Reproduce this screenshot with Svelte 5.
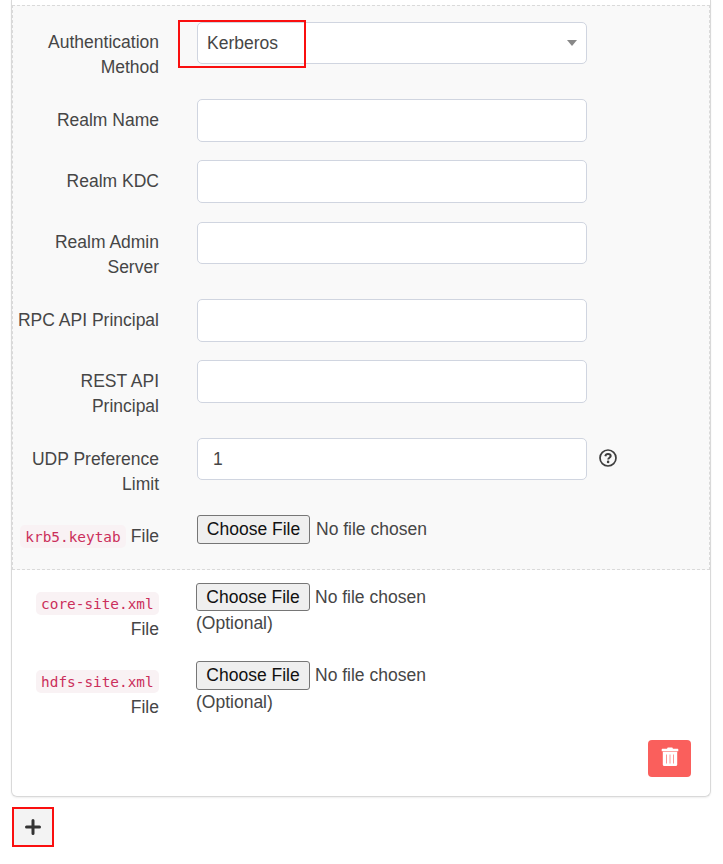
<script>
  const fields = [
    { label: ['Realm Name'], height: 61, value: '' },
    { label: ['Realm KDC'], height: 62, value: '' },
    { label: ['Realm Admin', 'Server'], height: 77, box: 42, top: 8, value: '' },
    { label: ['RPC API Principal'], height: 61, value: '' },
    { label: ['REST API', 'Principal'], height: 78, value: '' },
    { label: ['UDP Preference', 'Limit'], height: 77, box: 42, value: '1', help: true }
  ];
  const siteFiles = [
    { name: 'core-site.xml', height: 78, button: 28 },
    { name: 'hdfs-site.xml', height: 79, button: 29 }
  ];
</script>

<main>
  <section class="card">
    <div class="auth">
      <div class="row" style="height: 77px">
        <div class="label"><span>Authentication</span><span>Method</span></div>
        <div class="control select" style="height: 42px">
          <span>Kerberos</span>
          <i class="caret"></i>
          <div class="highlight"></div>
        </div>
      </div>
      {#each fields as f}
        <div class="row" style="height: {f.height}px">
          <div class="label" style="padding-top: {f.top ?? 9}px">{#each f.label as line}<span>{line}</span>{/each}</div>
          <div class="control" style="height: {f.box ?? 43}px">{f.value}</div>
          {#if f.help}
            <svg class="help" viewBox="0 0 18 18" width="18" height="18">
              <circle cx="9" cy="9" r="8" fill="none" stroke="#3e3e3e" stroke-width="1.7" />
              <path d="M6.3 7.2C6.600 5.700 7.600 5 9 5c1.500 0 2.700.8 2.700 2.100 0 1.600-2.500 1.700-2.500 3.300" fill="none" stroke="#3e3e3e" stroke-width="2" />
              <circle cx="9.1" cy="12.900" r="1.300" fill="#3e3e3e" />
            </svg>
          {/if}
        </div>
      {/each}
      <div class="row">
        <div class="label keytab"><span><code>krb5.keytab</code> File</span></div>
        <div class="file">
          <div class="picker"><button style="height: 29px">Choose File</button><span>No file chosen</span></div>
        </div>
      </div>
    </div>

    <div class="sites">
      {#each siteFiles as s}
        <div class="row" style="height: {s.height}px">
          <div class="label"><span class="name"><code>{s.name}</code></span><span>File</span></div>
          <div class="file">
            <div class="picker"><button style="height: {s.button}px">Choose File</button><span>No file chosen</span></div>
            <div class="optional">(Optional)</div>
          </div>
        </div>
      {/each}
    </div>

    <div class="actions">
      <button class="delete" aria-label="Delete">
        <svg viewBox="0 0 18 20" width="18" height="20">
          <path d="M6 1.800 6.700.6h4.600l.7 1.200h4.700q.6 0 .6.6v1.900H.7V2.400q0-.6.6-.6z" fill="#fff" />
          <path d="M1.800 4.800h14.400v12.700q0 1.500-1.500 1.500H3.300q-1.500 0-1.500-1.500z" fill="#fff" />
          <path d="M5.500 7.500v9M9 7.500v9M12.500 7.500v9" stroke="#fa5f5c" stroke-width="1" stroke-opacity=".65" />
        </svg>
      </button>
    </div>
  </section>

  <button class="add" aria-label="Add">
    <svg viewBox="0 0 16 16" width="16" height="16">
      <path d="M8 1.500v13M1.500 8h13" stroke="#333" stroke-width="3" stroke-linecap="round" />
    </svg>
  </button>
</main>

<style>
  :global(body) {
    background: #fff;
  }
  main {
    box-sizing: border-box;
    width: 723px;
    height: 864px;
    padding: 0 12px 0 11px;
    overflow: hidden;
    font: 17.5px/25px 'Liberation Sans', Arial, sans-serif;
    color: #464646;
  }
  main * {
    box-sizing: border-box;
  }
  .card {
    height: 797px;
    padding-top: 5px;
    border: 1px solid #d9d9d9;
    border-top: 0;
    border-radius: 0 0 6px 6px;
    box-shadow: 0 1px 2px rgba(0, 0, 0, 0.07);
  }
  .auth {
    height: 565px;
    padding: 16px 0 0 5px;
    border: 1px dashed #dadada;
    background: #f9f9f9;
  }
  .row {
    display: flex;
    align-items: flex-start;
  }
  .label {
    display: flex;
    flex: none;
    flex-direction: column;
    align-items: flex-end;
    width: 141px;
    margin-right: 38px;
    padding-top: 8px;
    white-space: nowrap;
  }
  .keytab {
    padding-top: 9px;
  }
  .name {
    height: 26px;
  }
  .control {
    display: flex;
    align-items: center;
    width: 390px;
    padding-left: 15px;
    border: 1px solid #d0d5e0;
    border-radius: 5px;
    background: #fff;
  }
  .select {
    position: relative;
    justify-content: space-between;
    padding: 0 9px;
  }
  .caret {
    border: 5px solid transparent;
    border-top: 6px solid #888;
    border-bottom: 0;
  }
  .highlight {
    position: absolute;
    top: -3px;
    left: -20px;
    width: 128px;
    height: 48px;
    border: 2px solid #fa0f0f;
  }
  .help {
    margin: 11px 0 0 12px;
  }
  code {
    display: inline-block;
    height: 23px;
    padding: 0 5.300px;
    border-radius: 5px;
    background: #f9f2f4;
    color: #cb2f5b;
    font: 14.4px/24px 'DejaVu Sans Mono', monospace;
  }
  .picker {
    display: flex;
    align-items: center;
    gap: 6px;
    white-space: nowrap;
  }
  .picker button {
    width: 113px;
    padding: 0;
    border: 1px solid #767676;
    border-radius: 3px;
    background: #efefef;
    color: #111;
    font: inherit;
  }
  .sites {
    padding: 13px 0 0 6px;
  }
  .sites .file {
    margin-left: -1px;
  }
  .sites .picker button {
    width: 114px;
  }
  .sites .picker {
    gap: 5px;
  }
  .actions {
    display: flex;
    justify-content: flex-end;
    padding-right: 19px;
  }
  .delete {
    display: flex;
    justify-content: center;
    align-items: flex-start;
    width: 43px;
    height: 37px;
    padding: 7px 0 0;
    border: 0;
    border-radius: 4px;
    background: #fa5f5c;
  }
  .add {
    display: flex;
    align-items: center;
    justify-content: center;
    width: 42px;
    height: 40px;
    margin: 10px 0 0 1px;
    padding: 0 0 1px;
    border: 2px solid #fa0f0f;
    background: #f3f3f3;
  }
</style>
